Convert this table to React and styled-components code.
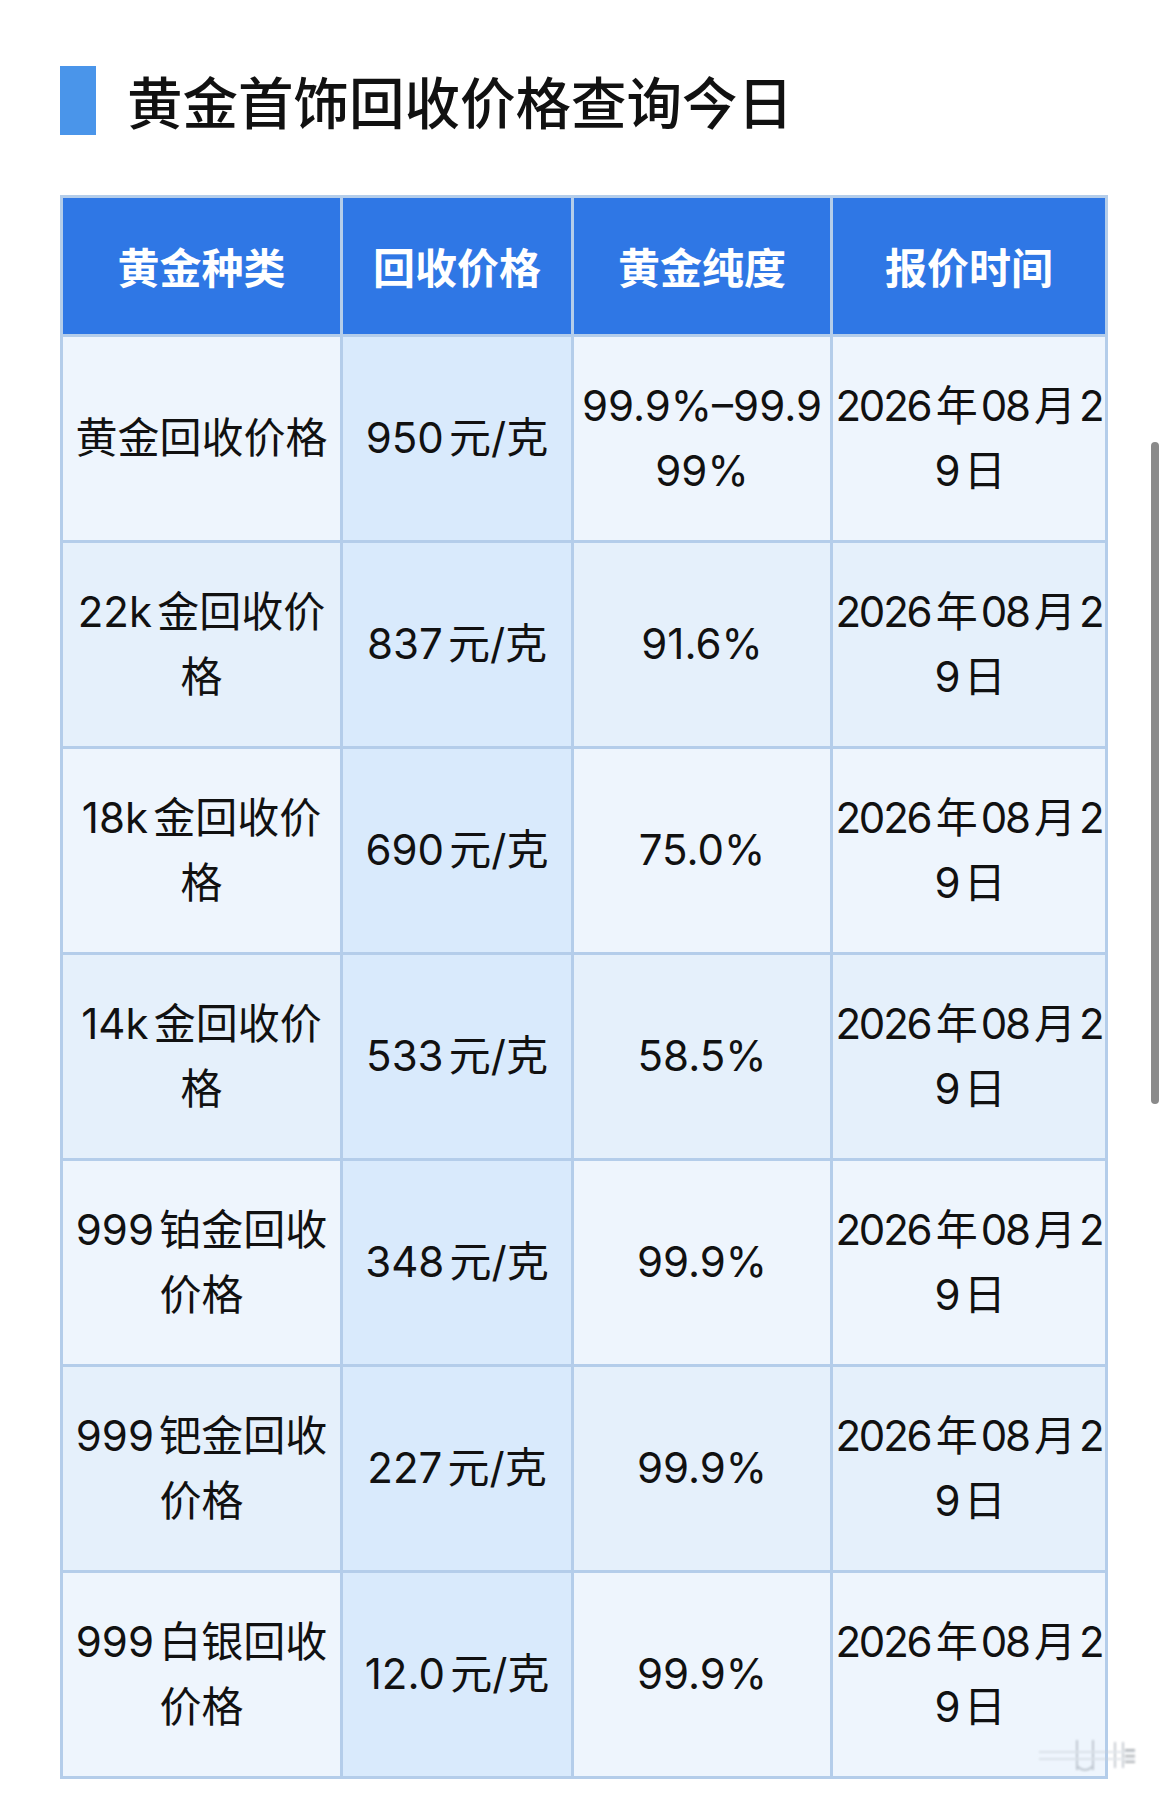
import React from 'react';
import styled, { createGlobalStyle } from 'styled-components';

const colors = {
  ink: '#111111',
  accent: '#4a95ea',
  header: '#2f77e5',
  line: '#b4cdea',
  rowLight: '#eef5fd',
  rowDark: '#e5f0fb',
  priceCol: '#d9eafc',
  thumb: '#8a8a8a',
};

const GlobalStyle = createGlobalStyle`
  body {
    margin: 0;
    background: #ffffff;
    font-family: "Inter", "Noto Sans CJK SC", sans-serif;
    color: ${colors.ink};
  }
`;

const Page = styled.div`
  position: relative;
  width: 1159px;
  box-sizing: border-box;
  padding: 66px 51px 19px 60px;
`;

const TitleRow = styled.div`
  display: flex;
  align-items: center;
  gap: 31px;
  height: 69px;
`;

const TitleBar = styled.div`
  width: 36px;
  height: 69px;
  background: ${colors.accent};
`;

const Title = styled.h1`
  margin: 0;
  font-family: "Noto Sans CJK SC", sans-serif;
  font-size: 55.5px;
  font-weight: 500;
  line-height: 1;
  color: ${colors.ink};
`;

const PriceTable = styled.table`
  margin-top: 60px;
  width: 1048px;
  table-layout: fixed;
  border-collapse: separate;
  border-spacing: 0;
  border-top: 3px solid ${colors.line};
  border-left: 3px solid ${colors.line};
  box-sizing: border-box;
`;

const HeadCell = styled.th`
  box-sizing: border-box;
  padding: 35px 0;
  background: ${colors.header};
  color: #ffffff;
  font-family: "Noto Sans CJK SC", sans-serif;
  font-size: 42px;
  font-weight: 700;
  line-height: 65.5px;
  text-align: center;
  border-right: 3px solid ${colors.line};
  border-bottom: 3px solid ${colors.line};
`;

const Cell = styled.td`
  box-sizing: border-box;
  padding: 36px ${(p) => p.$pad}px;
  background: ${(p) => (p.$price ? colors.priceCol : p.$odd ? colors.rowLight : colors.rowDark)};
  font-size: 42px;
  font-weight: 400;
  line-height: 65.5px;
  letter-spacing: ${(p) => (p.$tight ? '-2.2px' : 'normal')};
  text-align: center;
  vertical-align: middle;
  word-break: break-all;
  text-autospace: normal;
  border-right: 3px solid ${colors.line};
  border-bottom: 3px solid ${colors.line};
  overflow: hidden;
`;

const Scrollbar = styled.div`
  position: fixed;
  top: 442px;
  right: 0;
  width: 8px;
  height: 662px;
  border-radius: 4px;
  background: ${colors.thumb};
`;

const Watermark = styled.svg`
  position: absolute;
  right: 22px;
  bottom: 22px;
  opacity: 0.55;
  filter: blur(0.8px);
`;

const columns = [
  { title: '黄金种类', key: 'name', width: 280, pad: 6 },
  { title: '回收价格', key: 'price', width: 231, pad: 1 },
  { title: '黄金纯度', key: 'purity', width: 259, pad: 1 },
  { title: '报价时间', key: 'date', width: 275, pad: 0 },
];

const quoteDate = '2026年08月29日';

const prices = [
  { name: '黄金回收价格', price: '950元/克', purity: '99.9%–99.999%' },
  { name: '22k金回收价格', price: '837元/克', purity: '91.6%' },
  { name: '18k金回收价格', price: '690元/克', purity: '75.0%' },
  { name: '14k金回收价格', price: '533元/克', purity: '58.5%' },
  { name: '999铂金回收价格', price: '348元/克', purity: '99.9%' },
  { name: '999钯金回收价格', price: '227元/克', purity: '99.9%' },
  { name: '999白银回收价格', price: '12.0元/克', purity: '99.9%' },
].map((row) => ({ ...row, date: quoteDate }));

const App = () => (
  <>
    <GlobalStyle />
    <Page>
      <TitleRow>
        <TitleBar />
        <Title>黄金首饰回收价格查询今日</Title>
      </TitleRow>

      <PriceTable>
        <colgroup>
          {columns.map((col) => (
            <col key={col.key} style={{ width: col.width }} />
          ))}
        </colgroup>
        <thead>
          <tr>
            {columns.map((col) => (
              <HeadCell key={col.key}>{col.title}</HeadCell>
            ))}
          </tr>
        </thead>
        <tbody>
          {prices.map((row, i) => (
            <tr key={row.name}>
              {columns.map((col) => (
                <Cell
                  key={col.key}
                  $pad={col.pad}
                  $price={col.key === 'price'}
                  $tight={col.key === 'date'}
                  $odd={i % 2 === 0}
                >
                  {row[col.key]}
                </Cell>
              ))}
            </tr>
          ))}
        </tbody>
      </PriceTable>

      <Watermark width="100" height="44" viewBox="0 0 100 44">
        <g stroke="#9aa3ad" strokeWidth="2" fill="none">
          <path d="M40 8v30M56 8v30M78 10v26M86 10v26" />
          <path d="M40 34q8 8 16 0" />
          <path d="M2 20h96M2 27h96" stroke="#c9d0d8" />
          <path d="M88 18h10M88 24h10M88 30h10" stroke="#6b737c" />
        </g>
      </Watermark>
    </Page>
    <Scrollbar />
  </>
);

export default App;
